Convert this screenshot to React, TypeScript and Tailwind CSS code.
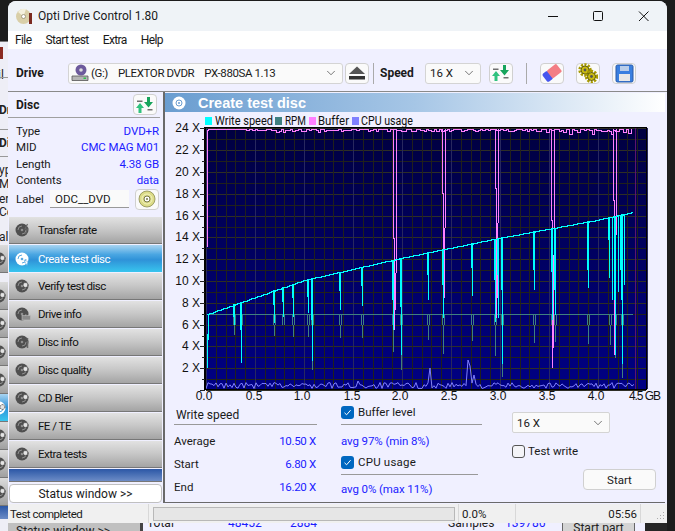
import React from "react";
import { ChevronDown } from "lucide-react";

const rng = (seed: number) => {
  let s = seed;
  return () => {
    s = (s * 16807) % 2147483647;
    return (s - 1) / 2147483646;
  };
};

const SPEED: [number, number][] = [[207, 314], [255, 297], [304, 280], [352, 269], [400, 258], [449, 248], [498, 238], [547, 229], [596, 220], [633, 212]];
const speedY = (x: number) => {
  for (let i = 0; i < SPEED.length - 1; i++) {
    const [a, b] = SPEED[i];
    const [c, d] = SPEED[i + 1];
    if (x <= c) return b + ((x - a) / (c - a)) * (d - b);
  }
  return 212;
};

const CYAN: [number, number, number][] = [
  [234, 317, 325], [241, 330, 363], [274, 305, 323], [283, 302, 317], [293, 298, 317], [308, 297, 313], [312, 320, 361],
  [340, 291, 310], [362, 286, 306], [393, 300, 330], [401, 307, 355], [428, 275, 300], [443, 285, 318], [472, 268, 296],
  [495, 280, 322], [498, 275, 318], [502, 290, 364], [534, 270, 290], [552, 272, 320], [555, 290, 315], [588, 270, 288],
  [609, 240, 278], [615, 300, 355], [622, 300, 364],
];
const THIN: [number, number][] = [[612, 300], [618, 292], [620, 270], [624, 285]];
const RPM: [number, number][] = [
  [234, 335], [241, 363], [274, 336], [283, 325], [293, 337], [308, 337], [312, 370], [340, 338], [362, 338], [393, 352],
  [401, 370], [428, 340], [443, 354], [472, 341], [495, 356], [502, 377], [534, 343], [552, 358], [555, 342], [588, 344],
  [610, 345], [615, 358], [622, 378],
];
const BUF: [number, number, number][] = [
  [393, 238, 330], [442, 193, 318], [495, 188, 318], [551, 220, 368], [613, 200, 355],
];

function speedPath() {
  let d = "M207 314";
  for (let x = 209; x <= 633; x += 2) d += `H${x}V${Math.round(speedY(x))}`;
  return d;
}
function bufferPath() {
  const r = rng(4711);
  let d = "M207 247V130";
  let x = 208;
  while (x < 633) {
    const noisy = x > 545;
    const y = x < 245 ? 129 : 129 + Math.round(r() * r() * (noisy ? 10 : 4));
    d += `H${x}V${y}`;
    x += 2 + Math.floor(r() * 2);
  }
  return d;
}
function cpuPath() {
  const r = rng(91);
  const spikes: Record<number, number> = { 430: 368, 468: 360, 470: 366, 474: 375, 358: 381 };
  let d = "M206 389";
  for (let x = 206; x <= 634; x += 2) {
    const y = spikes[x] ?? 388.5 - r() * 6;
    d += `L${x} ${y.toFixed(1)}`;
  }
  return d;
}

function Chart() {
  const vs: number[] = [];
  for (let i = 0; i <= 45; i++) vs.push(206 + 9.8 * i);
  const hs: number[] = [];
  for (let i = 0; i <= 24; i++) hs.push(390 - 10.9 * i);
  const legend: [number, string, number, string, number][] = [
    [205, "#00ffff", 215, "Write speed", 58],
    [275, "#408080", 285, "RPM", 21],
    [309, "#ff80ff", 318, "Buffer", 31],
    [352, "#8080ff", 361, "CPU usage", 52],
  ];
  const xl: [number, string][] = [[204, "0.0"], [254, "0.5"], [302, "1.0"], [352, "1.5"], [400, "2.0"], [449, "2.5"], [498, "3.0"], [547, "3.5"], [596, "4.0"]];
  return (
    <svg width={500} height={293} viewBox="165 112 500 293" className="block shrink-0" fontFamily="'Liberation Sans', sans-serif" fontSize="12">
      <defs>
        <linearGradient id="plot" x1="0" y1="0" x2="0" y2="1">
          <stop offset="0" stopColor="#000040" />
          <stop offset="1" stopColor="#000084" />
        </linearGradient>
      </defs>
      {legend.map(([a, c, b, t, w]) => (
        <g key={t}>
          <rect x={a} y={117} width={7} height={8} fill={c} />
          <text x={b} y={125} fill="#111" fontFamily="Roboto, sans-serif" textLength={w} lengthAdjust="spacingAndGlyphs">{t}</text>
        </g>
      ))}
      <rect x={205} y={127} width={442} height={263} fill="url(#plot)" />
      <g shapeRendering="crispEdges">
        {hs.map((y, i) => (
          <line key={i} x1={206} x2={646} y1={Math.round(y)} y2={Math.round(y)} stroke={i % 2 ? "#20201c" : "#2e2e26"} />
        ))}
        {vs.map((x, i) => (
          <line key={i} x1={Math.round(x)} x2={Math.round(x)} y1={128} y2={389} stroke={i % 5 ? "#20201c" : "#28285e"} />
        ))}
        <line x1={635} x2={635} y1={128} y2={389} stroke="#5c1470" />
        <path d="M207 314H633" stroke="#408080" fill="none" />
        {RPM.map(([x, low]) => (
          <path key={x} d={`M${x - 1} 314V${Math.min(low, 325)}M${x + 1} 314V${Math.min(low, 325)}M${x} 325V${low}`} stroke="#408080" fill="none" />
        ))}
        <path d={bufferPath()} stroke="#ff80ff" fill="none" />
        {BUF.map(([x, mid, low]) => (
          <path key={x} d={`M${x} 129V${mid}M${x + 3} 129V${mid + 35}M${x + 1} ${mid}V${low}M${x + 2} ${mid + 35}V${low - 20}M${x} ${mid}H${x + 1}`} stroke="#ff80ff" fill="none" />
        ))}
        <path d="M207 368V334M208 314V340" stroke="#00ffff" fill="none" />
        {CYAN.map(([x, mid, low]) => {
          const top = Math.round(speedY(x));
          return (
            <g key={x} fill="#00ffff">
              <rect x={x - 1} y={top} width={2} height={mid - top} />
              <rect x={x} y={mid} width={1} height={low - mid} />
            </g>
          );
        })}
        {THIN.map(([x, low]) => (
          <line key={x} x1={x} x2={x} y1={Math.round(speedY(x))} y2={low} stroke="#00ffff" />
        ))}
        <path d={speedPath()} stroke="#00ffff" fill="none" />
      </g>
      <path d={cpuPath()} stroke="#8080ff" fill="none" strokeWidth="1" />
      <g shapeRendering="crispEdges">
        <rect x={204} y={127} width={2} height={263} fill="#000" />
        <rect x={204} y={127} width={443} height={1} fill="#000" />
        <rect x={646} y={127} width={1} height={263} fill="#000" />
        <rect x={204} y={389} width={443} height={1} fill="#000" />
        {hs.map((y, i) => (
          <line key={i} x1={i % 2 ? 202 : 200} x2={205} y1={Math.round(y)} y2={Math.round(y)} stroke="#222" />
        ))}
      </g>
      {[2, 4, 6, 8, 10, 12, 14, 16, 18, 20, 22, 24].map((v) => (
        <text key={v} x={200} y={Math.round(390 - 10.9 * v) + 4} textAnchor="end" fill="#111">{v} X</text>
      ))}
      {xl.map(([x, t]) => (
        <text key={t} x={x} y={400} textAnchor="middle" fill="#111">{t}</text>
      ))}
      <text x={629} y={400} fill="#111" textLength={32}>4.5 GB</text>
    </svg>
  );
}

const Arrows = () => (
  <svg width="20" height="18" viewBox="0 0 20 18">
    <path d="M2 4.5h5.5V6H2z" fill="#6f6f6f" />
    <path d="M3.5 17V12H1L5 7l4 5H6.5v5z" fill="#2fc27e" />
    <path d="M12 1h3v5h3l-4.5 5.5L9 6h3z" fill="#17a45c" />
    <path d="M12.5 13h5v1.5h-5z" fill="#6f6f6f" />
  </svg>
);
const Eject = () => (
  <svg width="18" height="14" viewBox="0 0 18 14">
    <path d="M9 0.5 17 8H1z" fill="#555" />
    <rect x="1" y="10" width="16" height="3.5" fill="#333" />
  </svg>
);
const Eraser = () => (
  <svg width="20" height="20" viewBox="0 0 20 20">
    <g transform="rotate(-38 10 10)">
      <rect x="1" y="5" width="7" height="10" rx="2" fill="#4656ee" />
      <rect x="7" y="5" width="12" height="10" rx="1.5" fill="#f37d84" />
    </g>
  </svg>
);
const Gear = ({ cx, cy }: { cx: number; cy: number }) => (
  <g>
    <circle cx={cx} cy={cy} r="5" fill="none" stroke="#a89a00" strokeWidth="3.4" strokeDasharray="2 1.2" />
    <circle cx={cx} cy={cy} r="4" fill="#c9bb10" stroke="#4d4a10" strokeWidth="0.8" />
    <circle cx={cx} cy={cy} r="1.4" fill="#555" />
  </g>
);
const Gears = () => (
  <svg width="20" height="20" viewBox="0 0 20 20">
    <Gear cx={7} cy={7} />
    <Gear cx={13.5} cy={13.5} />
  </svg>
);
const Floppy = () => (
  <svg width="19" height="19" viewBox="0 0 19 19">
    <rect x="1" y="1" width="17" height="17" rx="1.5" fill="#3a7fe0" stroke="#2a5aa8" />
    <rect x="5" y="2" width="9" height="5" fill="#b9cdea" />
    <rect x="4" y="10" width="11" height="7" fill="#e8e8e8" />
  </svg>
);
const LabelDisc = () => (
  <svg width="18" height="18" viewBox="0 0 18 18">
    <circle cx="9" cy="9" r="8" fill="#dcdc88" stroke="#8a8a50" strokeWidth="0.8" />
    <circle cx="9" cy="9" r="5" fill="none" stroke="#f2f2c0" strokeWidth="1" />
    <circle cx="9" cy="9" r="3" fill="#ffffff" stroke="#77774a" />
    <circle cx="9" cy="9" r="1" fill="#77774a" />
  </svg>
);
const AppIcon = () => (
  <svg width="17" height="17" viewBox="0 0 17 17">
    <circle cx="7.5" cy="8.5" r="7.5" fill="#d9cfa8" />
    <path d="M7.5 8.5 2 4a7.5 7.5 0 0 1 8-3z" fill="#f3efdc" />
    <circle cx="7.5" cy="8.5" r="2" fill="#fff" stroke="#8a8266" strokeWidth=".7" />
    <rect x="13" y="5" width="3" height="11" fill="#7a2a20" />
  </svg>
);
const DriveIcon = () => (
  <svg width="18" height="18" viewBox="0 0 18 18">
    <circle cx="10" cy="6" r="5.5" fill="#6d5a9c" />
    <circle cx="10" cy="6" r="1.8" fill="#ddd" />
    <path d="M1 12h16v4.5H1z" fill="#b5b5b5" stroke="#555" strokeWidth=".8" />
    <rect x="12.5" y="13.5" width="2.5" height="1.5" fill="#2fc24a" />
  </svg>
);

type NavKind = "rate" | "create" | "drive" | "info" | "gear";
const NavIcon = ({ kind, light }: { kind: NavKind; light?: boolean }) => {
  const c = light ? "#ffffff" : "#4f4f4f";
  const h = light ? "#5aa8e0" : "#8f8f8f";
  return (
    <svg width="16" height="16" viewBox="0 0 16 16" className="shrink-0">
      <circle cx="7" cy="8" r="6.5" fill={c} />
      <path d="M3 8a4 4 0 0 1 4-4M11 8a4 4 0 0 1-4 4" fill="none" stroke={h} strokeWidth="1" />
      <circle cx="7" cy="8" r="1.3" fill={h} />
      {kind === "rate" && <path d="M12.5 2 10 7h2.5l-2 5" stroke="#666" strokeWidth="1.2" fill="none" />}
      {kind === "create" && <path d="M9 9l4 1.5-1 4z" fill={c} stroke="#5aa8e0" strokeWidth=".6" />}
      {kind === "drive" && <rect x="7" y="9.5" width="8.5" height="4.5" fill="#8a8a8a" stroke="#bbb" strokeWidth=".6" />}
      {kind === "info" && <path d="M12.5 4v1.5M12.5 7v7" stroke="#666" strokeWidth="1.5" />}
      {kind === "gear" && <circle cx="10.5" cy="7" r="2.4" fill="#e4e4e4" stroke="#444" strokeWidth="1" strokeDasharray="1 .6" />}
    </svg>
  );
};

const NAV: [string, NavKind][] = [
  ["Transfer rate", "rate"], ["Create test disc", "create"], ["Verify test disc", "gear"], ["Drive info", "drive"], ["Disc info", "info"],
  ["Disc quality", "gear"], ["CD Bler", "gear"], ["FE / TE", "gear"], ["Extra tests", "gear"],
];

const ToolBtn = ({ children, w = "w-6" }: { children: React.ReactNode; w?: string }) => (
  <div className={`${w} h-[21px] flex items-center justify-center rounded-[4px] border border-[#d0d0d0] bg-[#fafafa] shrink-0`}>{children}</div>
);
const Check = () => (
  <span className="w-[13px] h-[13px] rounded-[3px] bg-[#0067c0] flex items-center justify-center shrink-0">
    <svg width="9" height="9" viewBox="0 0 9 9"><path d="M1.5 4.8 3.6 6.8 7.6 2.2" stroke="#fff" strokeWidth="1" fill="none" /></svg>
  </span>
);
const Info = ({ a, b }: { a: string; b: string }) => (
  <div className="h-[16.3px] flex justify-between items-center pl-2 pr-[3px] tracking-[-0.1px]">
    <span>{a}</span>
    <span className="text-[#1c1cff]">{b}</span>
  </div>
);
const Stat = ({ a, b, cls }: { a: string; b: string; cls: string }) => (
  <div className={`flex justify-between items-center h-4 pr-[1px] ${cls}`}>
    <span>{a}</span>
    <span className="text-[#1c1cff] tracking-[-0.3px]">{b}</span>
  </div>
);

function Behind() {
  const rows = [245, 282, 310, 338, 366, 394, 422, 450, 478];
  return (
    <>
      <div className="absolute left-0 top-[41px] w-[8px] h-[490px] bg-[#eeeef6] overflow-hidden font-['Roboto',sans-serif] text-[12px] text-[#222]">
        <div className="h-px bg-[#777]" />
        <div className="absolute left-0 top-[6px] w-[3px] h-[12px] bg-[#8a2a20]" />
        <div className="absolute top-[26px] -left-[2px] leading-4">il</div>
        <div className="absolute top-[36px] left-0 w-full h-px bg-[#999]" />
        <div className="absolute top-[61px] -left-[1px] font-bold leading-4">Dr</div>
        <div className="absolute top-[88px] left-0 w-full h-px bg-[#999]" />
        <div className="absolute top-[94px] -left-[1px] font-bold leading-4">Dis</div>
        <div className="absolute top-[115px] left-0 w-full h-px bg-[#999]" />
        <div className="absolute top-[121px] -left-[1px] leading-4">yp</div>
        <div className="absolute top-[135px] -left-[1px] leading-4">MI</div>
        <div className="absolute top-[150px] -left-[1px] leading-4">er</div>
        <div className="absolute top-[163px] -left-[1px] leading-4">Co</div>
        <div className="absolute top-[188px] -left-[1px] leading-4">al</div>
        {rows.map((y, i) => (
          <div
            key={y}
            style={{ top: y - 41 }}
            className={`absolute left-0 w-full overflow-hidden border-b border-[#777] h-[28px] ${i === 5 ? "bg-[linear-gradient(180deg,#a8d4f2,#2f92d8_50%,#38c5ee)]" : "bg-[linear-gradient(180deg,#dcdcdc,#a0a0a0)]"}`}
          >
            <div className="absolute top-[6px] -left-[8px]"><NavIcon kind="gear" light={i === 5} /></div>
          </div>
        ))}
        <div className="absolute top-[465px] left-0 w-full h-[13px] bg-[linear-gradient(180deg,#2b57a6,#6c8cc6)]" />
      </div>
      <div className="absolute left-[8px] top-[523px] w-[659px] h-[8px] overflow-hidden bg-[#f0f0ff] font-['Roboto',sans-serif] text-[12px] leading-4 text-[#222]">
        <div className="absolute left-0 top-0 w-[132px] h-full bg-[#c0c0c0]">
          <span className="absolute left-[8px] top-0 whitespace-nowrap">Status window &gt;&gt;</span>
        </div>
        <div className="absolute left-[132px] top-0 w-[3px] h-full bg-[#444]" />
        <span className="absolute left-[139px] -top-[8px]">Total</span>
        <span className="absolute left-[220px] -top-[8px] text-[#1c1cff]">48452</span>
        <span className="absolute left-[282px] -top-[8px] text-[#1c1cff]">2884</span>
        <span className="absolute left-[440px] -top-[8px]">Samples</span>
        <span className="absolute left-[497px] -top-[8px] text-[#1c1cff]">139786</span>
        <div className="absolute left-[554px] top-0 w-[73px] h-full bg-[#d4d4d4] border-l border-[#666] border-r text-center">
          <span className="relative -top-[3px]">Start part</span>
        </div>
        <div className="absolute left-[637px] top-0 w-[22px] h-full bg-[#262626]" />
      </div>
    </>
  );
}

export default function App() {
  return (
    <div className="relative w-[675px] h-[531px] overflow-hidden bg-[#1c1c1c]">
      <Behind />
      <div className="absolute left-[8px] top-[1px] w-[659px] h-[522px] rounded-t-[8px] overflow-hidden flex flex-col bg-[#f0f0ff] font-['Roboto',sans-serif] text-[11.5px] leading-4 text-[#1a1a1a]">
        <div className="h-[30px] bg-[#eff3f7] flex items-center shrink-0">
          <div className="ml-2 mt-[1px]"><AppIcon /></div>
          <span className="ml-[5px] text-[12px]">Opti Drive Control 1.80</span>
          <svg width="110" height="12" viewBox="0 0 110 12" className="ml-auto mr-[9px]">
            <path d="M0 6.5H10" stroke="#111" />
            <rect x="45.5" y="1.5" width="9" height="9" rx="1" fill="none" stroke="#111" />
            <path d="M91 1.5l9.5 9.5M100.5 1.5 91 11" stroke="#111" fill="none" />
          </svg>
        </div>
        <div className="h-[18px] bg-white flex items-center gap-[14px] pl-[7px] shrink-0 text-[12px] tracking-[-0.6px]">
          <span>File</span><span>Start test</span><span>Extra</span><span>Help</span>
        </div>
        <div className="h-[43px] shrink-0 flex items-center border-b border-[#8a8a8a] pt-[6px]">
          <span className="ml-2 w-[52px] font-bold text-[12px]">Drive</span>
          <div className="w-[275px] h-[21px] bg-[#fafafa] border border-[#d4d4d4] rounded-[3px] flex items-center pl-[2px] pr-[4px] tracking-[-0.4px]">
            <DriveIcon />
            <span className="ml-[2px]">(G:)</span>
            <span className="ml-[10px]">PLEXTOR DVDR</span>
            <span className="ml-[10px]">PX-880SA 1.13</span>
            <ChevronDown size={14} strokeWidth={1} className="ml-auto" />
          </div>
          <div className="ml-[2px]"><ToolBtn><Eject /></ToolBtn></div>
          <div className="ml-1 w-px h-[21px] bg-[#aaa]" />
          <span className="ml-[6px] w-[45px] font-bold text-[12px]">Speed</span>
          <div className="w-[56px] h-[21px] bg-[#fafafa] border border-[#d4d4d4] rounded-[3px] flex items-center pl-1 pr-1">
            <span>16 X</span>
            <ChevronDown size={14} strokeWidth={1} className="ml-auto" />
          </div>
          <div className="ml-2"><ToolBtn><Arrows /></ToolBtn></div>
          <div className="ml-[13px] w-px h-[21px] bg-[#aaa]" />
          <div className="ml-[13px]"><ToolBtn><Eraser /></ToolBtn></div>
          <div className="ml-3"><ToolBtn><Gears /></ToolBtn></div>
          <div className="ml-3"><ToolBtn><Floppy /></ToolBtn></div>
        </div>
        <div className="flex-1 flex min-h-0">
          <div className="w-[155px] shrink-0 flex flex-col">
            <div className="h-[26px] flex items-center justify-between border-b border-[#a0a0a0] pl-2 pr-[3px] mr-[3px] shrink-0">
              <span className="font-bold text-[12px]">Disc</span>
              <ToolBtn><Arrows /></ToolBtn>
            </div>
            <div className="mr-[1px] pt-[5px]">
              <Info a="Type" b="DVD+R" />
              <Info a="MID" b="CMC MAG M01" />
              <Info a="Length" b="4.38 GB" />
              <Info a="Contents" b="data" />
            </div>
            <div className="flex items-center h-[22px] pl-2 pr-[4px]">
              <span className="w-[34px]">Label</span>
              <div className="w-[79px] h-[18px] bg-[#fafafa] border-b border-[#999] pl-[5px] flex items-center">ODC__DVD</div>
              <div className="ml-[6px]"><ToolBtn><LabelDisc /></ToolBtn></div>
            </div>
            <div className="mt-[7px] flex flex-col ml-px">
              {NAV.map(([t, k], i) => (
                <div
                  key={t}
                  className={`h-[27px] mb-px w-[153px] flex items-center gap-[7px] pl-[6px] tracking-[-0.5px] ${
                    i === 1
                      ? "text-white bg-[linear-gradient(180deg,#a8d4f2,#4aa6e2_35%,#2f92d8_55%,#38c5ee)]"
                      : "border-b border-[#777] text-[#111] bg-[linear-gradient(180deg,#e2e2e2,#c6c6c6_50%,#a4a4a4)]"
                  }`}
                >
                  <NavIcon kind={k} light={i === 1} />
                  <span>{t}</span>
                </div>
              ))}
              <div className="h-[13px] w-[153px] bg-[linear-gradient(180deg,#2b57a6,#6c8cc6)] border-b border-[#777]" />
              <div className="mt-[2px] h-[19px] w-[153px] bg-white border border-[#c0c0c0] rounded-[4px] flex items-center justify-center text-[12px]">Status window &gt;&gt;</div>
            </div>
          </div>
          <div className="w-[502px] h-[411px] shrink-0 border-l-2 border-b border-[#6a6a6a] flex flex-col pt-px">
            <div className="h-[19px] shrink-0 flex items-center pl-[6px] bg-[linear-gradient(90deg,#6a9dd0,#a6c6e6_50%,#ffffff)] text-white">
              <svg width="16" height="16" viewBox="0 0 16 16">
                <circle cx="8" cy="8" r="6.5" fill="#fff" />
                <circle cx="8" cy="8" r="3" fill="none" stroke="#6a9dd0" />
                <circle cx="8" cy="8" r="1" fill="#6a9dd0" />
              </svg>
              <span className="ml-[11px] font-['Liberation_Sans',sans-serif] font-bold text-[14.5px]">Create test disc</span>
            </div>
            <Chart />
            <div className="flex pl-[9px] flex-1">
              <div className="w-[143px]">
                <div className="h-[20px] pl-[2px] flex items-center border-b border-[#999] text-[12px]">Write speed</div>
                <Stat a="Average" b="10.50 X" cls="mt-[8px]" />
                <Stat a="Start" b="6.80 X" cls="mt-[7px]" />
                <Stat a="End" b="16.20 X" cls="mt-[7px]" />
              </div>
              <div className="w-[141px] ml-[24px]">
                <div className="h-[20px] flex items-center gap-[4px] border-b border-[#999] pb-[5px]"><Check /><span>Buffer level</span></div>
                <div className="mt-[8px] h-4 flex items-center text-[#1c1cff] tracking-[-0.1px]">avg 97% (min 8%)</div>
                <div className="mt-[6px] h-[20px] flex items-center gap-[4px] border-b border-[#999] pb-[5px] w-[137px] tracking-[0.2px]"><Check /><span>CPU usage</span></div>
                <div className="mt-[6px] h-4 flex items-center text-[#1c1cff] tracking-[-0.1px]">avg 0% (max 11%)</div>
              </div>
              <div className="ml-[30px] w-[145px] pt-[7px] flex flex-col">
                <div className="w-[98px] h-[21px] bg-[#fafafa] border border-[#d4d4d4] rounded-[2px] flex items-center pl-1 pr-1">
                  <span>16 X</span>
                  <ChevronDown size={14} strokeWidth={1} className="ml-auto" />
                </div>
                <div className="mt-[10px] flex items-center gap-[3px]">
                  <span className="w-[13px] h-[13px] rounded-[3px] border border-[#555] bg-[#f4f4f8]" />
                  <span>Test write</span>
                </div>
                <div className="mt-[10px] ml-[71px] w-[73px] h-[21px] bg-[#fafafa] border border-[#d0d0d0] rounded-[4px] flex items-center justify-center">Start</div>
              </div>
            </div>
          </div>
        </div>
        <div className="h-[19px] shrink-0 bg-[#f0f0f0] flex items-center relative">
          <span className="pl-[2px] w-[140px] tracking-[-0.5px]">Test completed</span>
          <div className="w-px h-full bg-[#d8d8d8]" />
          <div className="ml-[4px] w-[302px] h-[14px] border border-[#b8b8b8] bg-[#e6e6e6]" />
          <div className="ml-[3px] w-px h-full bg-[#d8d8d8]" />
          <span className="ml-[3px] w-[53px]">0.0%</span>
          <div className="w-px h-full bg-[#d8d8d8]" />
          <span className="w-[121px] text-right">05:56</span>
          <div className="ml-[3px] w-px h-full bg-[#d8d8d8]" />
          <svg width="10" height="10" viewBox="0 0 10 10" className="absolute right-[2px] bottom-[2px]">
            <path d="M8 1h1v1H8zM5 4h1v1H5zM8 4h1v1H8zM2 7h1v1H2zM5 7h1v1H5zM8 7h1v1H8z" fill="#aaa" />
          </svg>
        </div>
      </div>
    </div>
  );
}
